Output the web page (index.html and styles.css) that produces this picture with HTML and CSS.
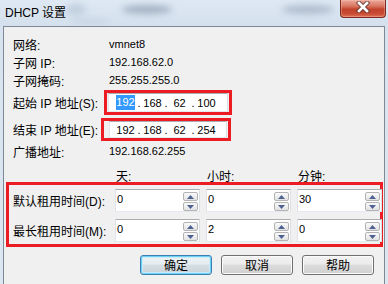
FILE: index.html
```html
<!DOCTYPE html>
<html lang="zh-CN">
<head>
<meta charset="utf-8">
<title>DHCP 设置</title>
<link rel="stylesheet" href="styles.css">
</head>
<body>
<div class="window">
  <div class="titlebar">
    <span class="glass g1"></span>
    <span class="glass g2"></span>
    <span class="glass g3"></span>
    <span class="glass g4"></span>
    <span class="title">DHCP 设置</span>
    <div class="close">
      <svg width="14" height="12" viewBox="0 0 14 12"><path class="x-out" d="M3 2 L11 10 M11 2 L3 10"/><path class="x-in" d="M3 2 L11 10 M11 2 L3 10"/></svg>
    </div>
  </div>
  <div class="panel">
    <div class="row"><span class="label">网络:</span><span class="value">vmnet8</span></div>
    <div class="row"><span class="label">子网 IP:</span><span class="value">192.168.62.0</span></div>
    <div class="row"><span class="label">子网掩码:</span><span class="value">255.255.255.0</span></div>
    <div class="iprow ip-start">
      <span class="label">起始 IP 地址(S):</span>
      <div class="mark">
        <div class="ipbox">
          <span class="oct"><span class="sel">192</span></span><span class="dot">.</span>
          <span class="oct">168</span><span class="dot">.</span>
          <span class="oct">62</span><span class="dot">.</span>
          <span class="oct">100</span>
        </div>
      </div>
    </div>
    <div class="iprow ip-end">
      <span class="label">结束 IP 地址(E):</span>
      <div class="mark">
        <div class="ipbox">
          <span class="oct">192</span><span class="dot">.</span>
          <span class="oct">168</span><span class="dot">.</span>
          <span class="oct">62</span><span class="dot">.</span>
          <span class="oct">254</span>
        </div>
      </div>
    </div>
    <div class="row bcast"><span class="label">广播地址:</span><span class="value">192.168.62.255</span></div>
    <div class="units"><span></span><span>天:</span><span>小时:</span><span>分钟:</span></div>
    <div class="lease">
      <span class="label">默认租用时间(D):</span>
      <div class="spin"><span class="num">0</span><div class="btns"><span class="sb"><svg width="7" height="4" viewBox="0 0 7 4"><polygon points="0,4 3.5,0 7,4"/></svg></span><span class="sb"><svg width="7" height="4" viewBox="0 0 7 4"><polygon points="0,0 7,0 3.5,4"/></svg></span></div></div>
      <div class="spin"><span class="num">0</span><div class="btns"><span class="sb"><svg width="7" height="4" viewBox="0 0 7 4"><polygon points="0,4 3.5,0 7,4"/></svg></span><span class="sb"><svg width="7" height="4" viewBox="0 0 7 4"><polygon points="0,0 7,0 3.5,4"/></svg></span></div></div>
      <div class="spin"><span class="num">30</span><div class="btns"><span class="sb"><svg width="7" height="4" viewBox="0 0 7 4"><polygon points="0,4 3.5,0 7,4"/></svg></span><span class="sb"><svg width="7" height="4" viewBox="0 0 7 4"><polygon points="0,0 7,0 3.5,4"/></svg></span></div></div>
      <span class="label">最长租用时间(M):</span>
      <div class="spin"><span class="num">0</span><div class="btns"><span class="sb"><svg width="7" height="4" viewBox="0 0 7 4"><polygon points="0,4 3.5,0 7,4"/></svg></span><span class="sb"><svg width="7" height="4" viewBox="0 0 7 4"><polygon points="0,0 7,0 3.5,4"/></svg></span></div></div>
      <div class="spin"><span class="num">2</span><div class="btns"><span class="sb"><svg width="7" height="4" viewBox="0 0 7 4"><polygon points="0,4 3.5,0 7,4"/></svg></span><span class="sb"><svg width="7" height="4" viewBox="0 0 7 4"><polygon points="0,0 7,0 3.5,4"/></svg></span></div></div>
      <div class="spin"><span class="num">0</span><div class="btns"><span class="sb"><svg width="7" height="4" viewBox="0 0 7 4"><polygon points="0,4 3.5,0 7,4"/></svg></span><span class="sb"><svg width="7" height="4" viewBox="0 0 7 4"><polygon points="0,0 7,0 3.5,4"/></svg></span></div></div>
    </div>
    <div class="actions">
      <button class="btn default">确定</button>
      <button class="btn">取消</button>
      <button class="btn">帮助</button>
    </div>
  </div>
</div>
</body>
</html>
```

FILE: styles.css
```css
* { box-sizing: border-box; }
html, body { margin: 0; padding: 0; }
body {
  font-family: "Liberation Sans", "Noto Sans CJK SC", sans-serif;
  font-size: 12px;
  color: #000;
  background: #fff;
}
.window {
  width: 388px;
  height: 284px;
  overflow: hidden;
  display: flex;
  flex-direction: column;
  background: linear-gradient(#d6e2ee, #dde7f1);
}
.titlebar {
  position: relative;
  height: 26px;
  flex: none;
  display: flex;
  align-items: flex-start;
  background: linear-gradient(#dde8f3, #d4e0ed);
}
.glass {
  position: absolute;
  border-radius: 50%;
  filter: blur(3px);
}
.g1 { left: 66px; top: 4px; width: 20px; height: 11px; background: rgba(150, 165, 185, 0.35); }
.g2 { left: 122px; top: 5px; width: 50px; height: 9px; background: rgba(105, 120, 145, 0.45); }
.g3 { left: 282px; top: 5px; width: 52px; height: 9px; background: rgba(115, 130, 155, 0.4); }
.g4 { left: 70px; top: 20px; width: 40px; height: 3px; background: rgba(130, 145, 165, 0.3); }
.title {
  position: relative;
  margin: 5px 0 0 5px;
  line-height: 16px;
  font-size: 12px;
  white-space: nowrap;
}
.close {
  position: relative;
  margin-left: auto;
  margin-right: 2px;
  width: 46px;
  height: 18px;
  border: 1px solid #7a2a1e;
  border-top: 0;
  border-radius: 0 0 4px 4px;
  background: linear-gradient(#eba99b 0%, #da7863 35%, #c2422b 55%, #c94b33 80%, #dc7157 100%);
  box-shadow: inset 0 0 0 1px rgba(255, 200, 190, 0.35);
  display: flex;
  justify-content: center;
  align-items: flex-start;
  padding-top: 1px;
}
.x-out { fill: none; stroke: #5a3a34; stroke-width: 4.6; stroke-linecap: square; opacity: 0.75; }
.x-in { fill: none; stroke: #fff; stroke-width: 2.6; stroke-linecap: square; }

.panel {
  flex: 1;
  margin: 0 3px;
  border: 1px solid #7d8995;
  border-bottom: 0;
  background: #f0f0f0;
  padding: 8px 0 0 9px;
  display: flex;
  flex-direction: column;
}
.row {
  display: flex;
  align-items: center;
  height: 18px;
  flex: none;
}
.label { flex: none; width: 96px; white-space: nowrap; }
.value { font-size: 11px; }
.bcast { margin-top: 1px; }

.iprow { display: flex; align-items: center; flex: none; }
.ip-start { margin-top: 1px; }
.ip-start .label { width: 91px; }
.ip-end { margin-top: 3px; }
.ip-end .label { width: 88px; }
.mark { border: 3px solid #ec1c24; }
.ip-start .mark { padding: 0 1px; }
.ip-end .mark { padding: 0 1px 0 5px; }
.ipbox {
  display: flex;
  align-items: center;
  width: 120px;
  height: 19px;
  padding-left: 5px;
  background: #fff;
  border: 1px solid;
  border-color: #abadb3 #dbdfe6 #e3e9ef #e2e3ea;
  font-size: 11px;
}
.ip-end .ipbox { width: 118px; height: 17px; padding-left: 4px; }
.oct { flex: none; width: 23px; text-align: center; }
.dot { flex: none; width: 4px; text-align: center; }
.sel {
  display: inline-block;
  line-height: 15px;
  padding: 0 0.5px;
  background: #3399ff;
  color: #fff;
}

.units {
  flex: none;
  display: grid;
  grid-template-columns: 96px 85px 85px 85px;
  column-gap: 6px;
  height: 14px;
  line-height: 18px;
  margin-top: 8px;
}
.units span { padding-left: 1px; white-space: nowrap; }

.lease {
  position: relative;
  flex: none;
  margin: 0 1px 0 -7px;
  border: 3px solid #ec1c24;
  padding: 4px 0 2px 4px;
  display: grid;
  grid-template-columns: 96px 85px 85px 85px;
  column-gap: 6px;
  row-gap: 7px;
  align-items: center;
}
.spin {
  display: flex;
  height: 23px;
  background: #fff;
  border: 1px solid;
  border-color: #abadb3 #dbdfe6 #e3e9ef #e2e3ea;
}
.num { flex: 1; padding-left: 1px; font-size: 11px; line-height: 19px; }
.btns {
  display: flex;
  flex-direction: column;
  gap: 1px;
  padding: 2px 1px 0 0;
}
.sb {
  width: 15px;
  height: 9px;
  border: 1px solid #b3b3b3;
  border-radius: 2px;
  background: linear-gradient(#fafafa, #e2e2e2);
  display: flex;
  align-items: center;
  justify-content: center;
}
.sb svg { display: block; }
.sb polygon { fill: #4f6193; }

.actions {
  flex: none;
  display: flex;
  justify-content: flex-end;
  gap: 9px;
  margin-top: 8px;
  padding-right: 10px;
}
.btn {
  width: 72px;
  height: 20px;
  margin: 0;
  padding: 0;
  border: 1px solid #707070;
  border-radius: 3px;
  background: linear-gradient(#f2f2f2 0%, #ebebeb 45%, #dddddd 50%, #cfcfcf 100%);
  box-shadow: inset 0 0 0 1px #fbfbfb;
  font-family: "Noto Sans CJK SC", sans-serif;
  font-size: 12px;
  line-height: 18px;
  color: #000;
  text-align: center;
}
.btn.default {
  border-color: #3c7fb1;
  background: linear-gradient(#eaf6fd 0%, #d9f0fc 45%, #bee6fd 50%, #a7d9f5 100%);
  background: linear-gradient(#eef3f6 0%, #e6ecef 45%, #d6dfe3 50%, #c9d3d8 100%);
  box-shadow: inset 0 0 0 1px #6fd0f6, inset 0 0 0 2px #c8ecfa;
}
```
